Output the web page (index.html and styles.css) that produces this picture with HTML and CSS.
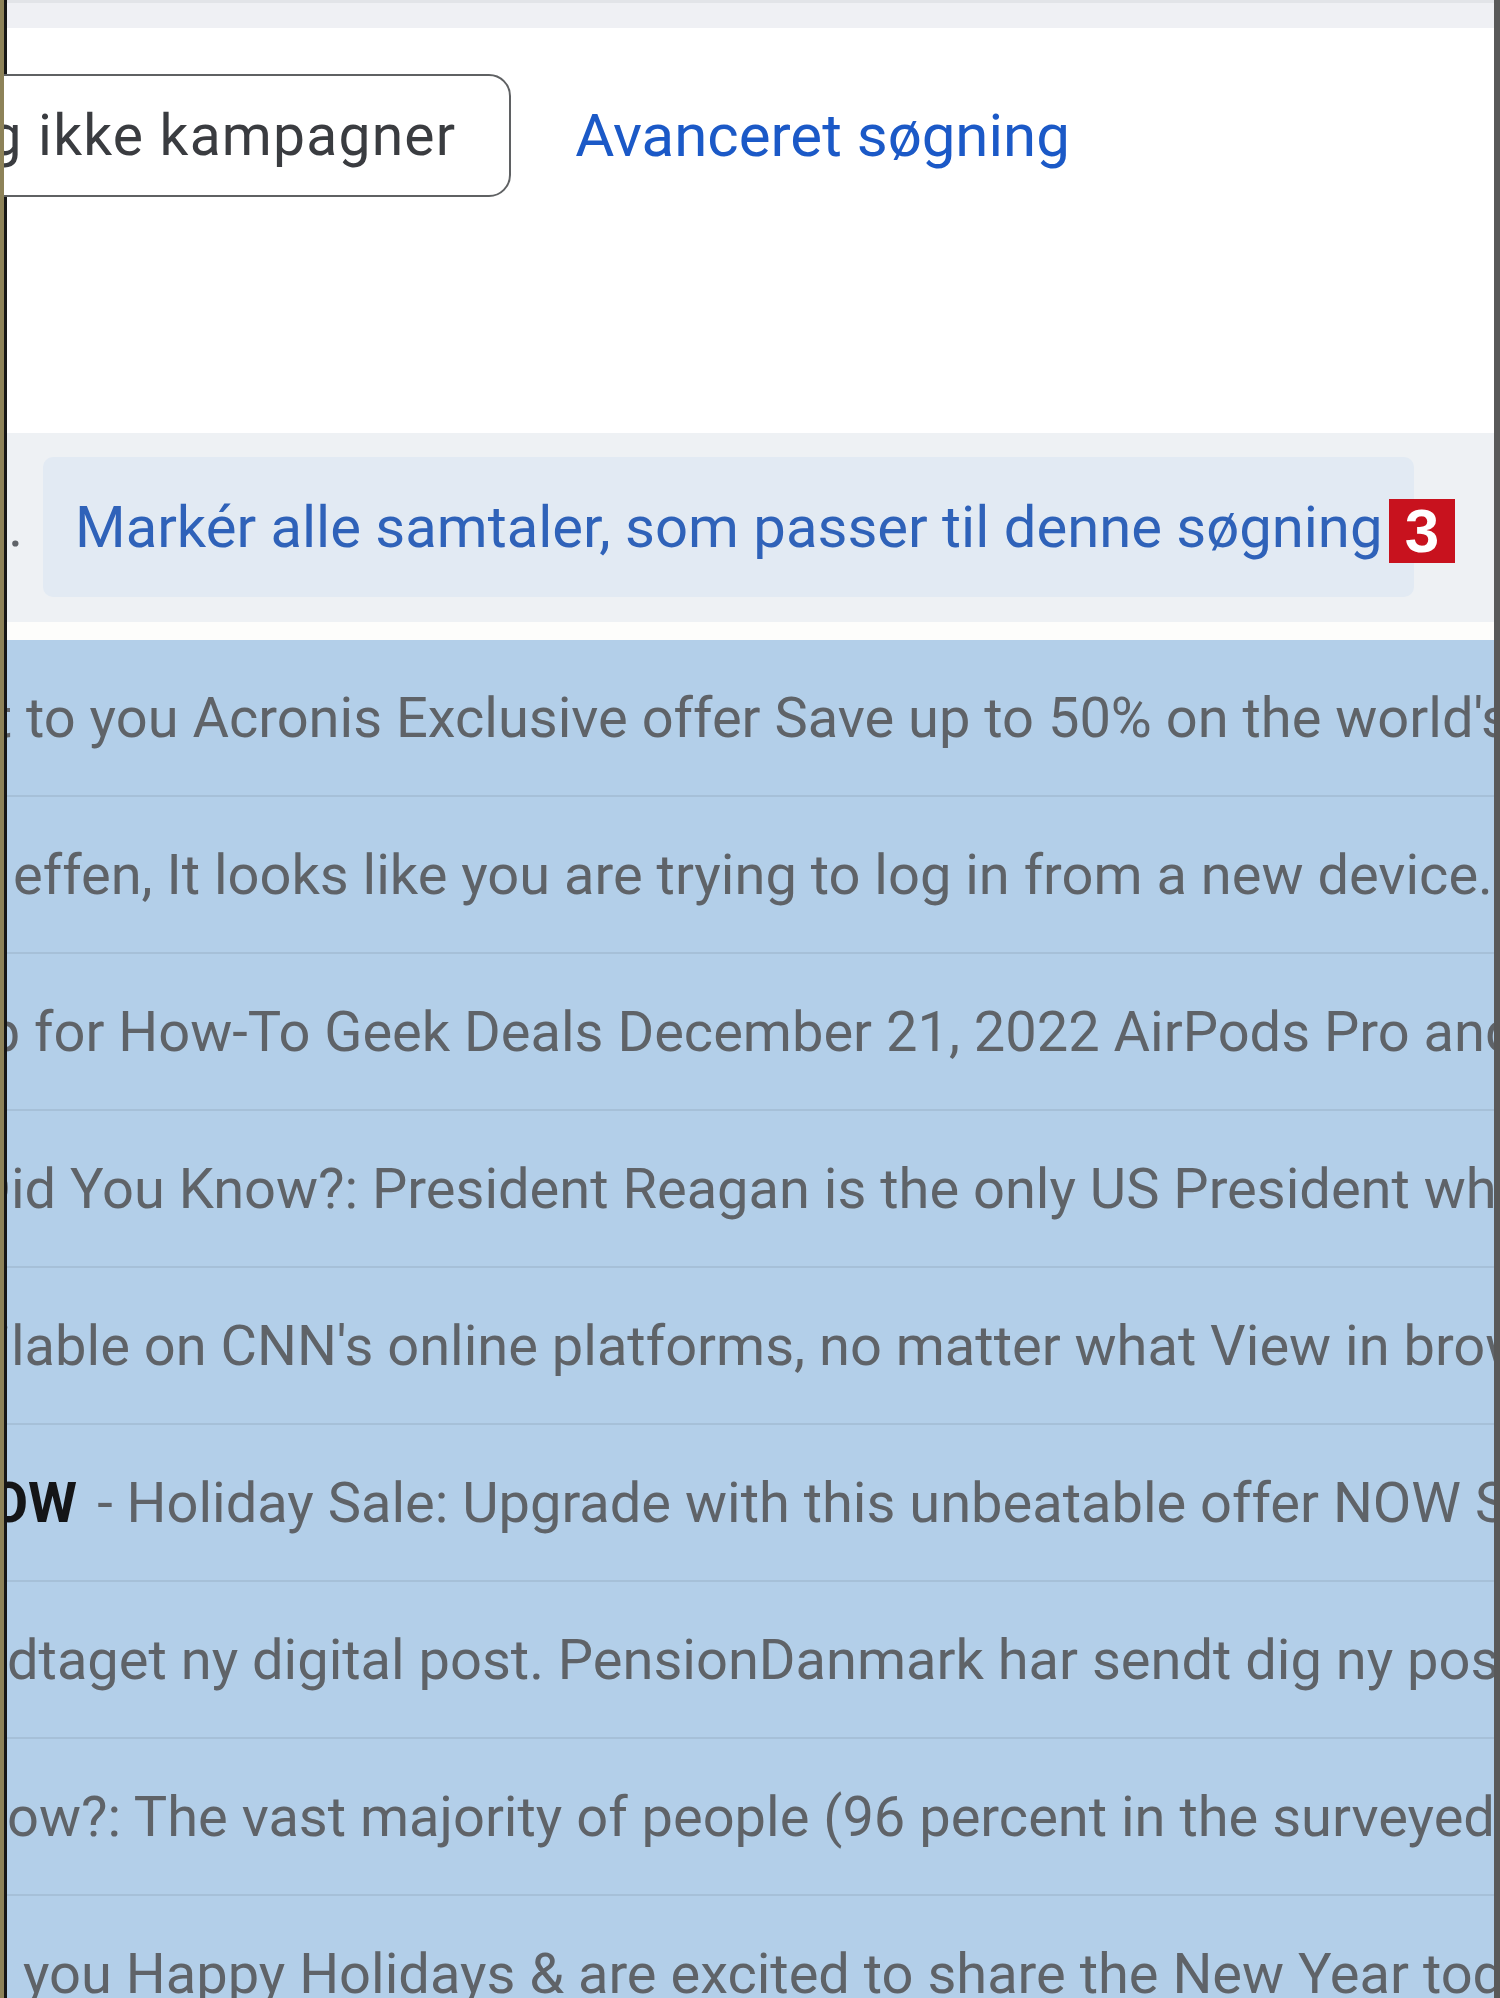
FILE: index.html
```html
<!DOCTYPE html>
<html lang="da">
<head>
<meta charset="utf-8">
<title>Gmail søgning</title>
<link rel="stylesheet" href="styles.css">
</head>
<body>
<div class="screen">
  <div class="frame">
    <div class="topband"></div>
    <div class="toolbar">
      <div class="toolbar-row">
        <button class="chip">Søg ikke kampagner</button>
        <a class="adv" href="#">Avanceret søgning</a>
      </div>
    </div>
    <div class="notice">
      <span class="lead">er markeret.</span>
      <div class="selectall">
        <a class="selectall-link" href="#">Markér alle samtaler, som passer til denne søgning</a>
      </div>
      <span class="badge">3</span>
    </div>
    <div class="gap"></div>
    <ul class="list">
      <li class="row r1"><span class="pre">brought </span><span class="snip">to you Acronis Exclusive offer Save up to 50% on the world's</span></li>
      <li class="row r2"><span class="pre">Hi St</span><span class="snip">effen, It looks like you are trying to log in from a new device.</span></li>
      <li class="row r3"><span class="pre">Sign up </span><span class="snip">for How-To Geek Deals December 21, 2022 AirPods Pro and</span></li>
      <li class="row r4"><span class="pre">D</span><span class="snip">id You Know?: President Reagan is the only US President who</span></li>
      <li class="row r5"><span class="pre">avai</span><span class="snip">lable on CNN's online platforms, no matter what View in browser</span></li>
      <li class="row r6"><span class="snip"><b class="subj">NOW</b><span class="sep">-</span>Holiday Sale: Upgrade with this unbeatable offer NOW Save</span></li>
      <li class="row r7"><span class="pre">Du har mo</span><span class="snip">dtaget ny digital post. PensionDanmark har sendt dig ny post</span></li>
      <li class="row r8"><span class="pre">Did You Kn</span><span class="snip">ow?: The vast majority of people (96 percent in the surveyed</span></li>
      <li class="row r9"><span class="pre">We wish </span><span class="snip">you Happy Holidays &amp; are excited to share the New Year today</span></li>
    </ul>
  </div>
</div>
</body>
</html>
```

FILE: styles.css
```css
* { box-sizing: border-box; }

html, body {
  margin: 0;
  padding: 0;
  background: #ffffff;
}

body {
  font-family: Roboto, "Noto Sans", "Liberation Sans", sans-serif;
}

.screen {
  width: 1500px;
  height: 1998px;
  overflow: hidden;
  display: flex;
  border-left: 4px solid #8d8258;
}

.frame {
  flex: 1;
  min-width: 0;
  display: flex;
  flex-direction: column;
  border-left: 3px solid #161616;
  border-right: 6px solid #595959;
  background: #ffffff;
}

.topband {
  height: 28px;
  flex: none;
  background: #eff0f4;
  border-top: 3px solid #e2e4e8;
}

.toolbar {
  height: 405px;
  flex: none;
  padding-top: 46px;
}

.toolbar-row {
  display: flex;
  align-items: center;
  gap: 64px;
  height: 123px;
  margin-left: -143px;
}

.chip {
  flex: none;
  height: 123px;
  padding: 0 53px 0 55px;
  border: 2px solid #5f6163;
  border-radius: 22px;
  background: #ffffff;
  color: #3a3c40;
  font-family: Roboto, "Noto Sans", sans-serif;
  font-size: 57px;
  letter-spacing: 1.2px;
  white-space: nowrap;
}

.adv {
  color: #1b59c7;
  font-size: 60px;
  text-decoration: none;
  white-space: nowrap;
}

.notice {
  position: relative;
  height: 189px;
  flex: none;
  display: flex;
  align-items: flex-start;
  padding-top: 24px;
  background: #eef1f4;
}

.lead {
  flex: none;
  width: 36px;
  height: 140px;
  display: flex;
  align-items: center;
  justify-content: flex-end;
  overflow: hidden;
  padding-right: 20px;
  color: #5f6368;
  font-size: 56px;
  white-space: pre;
}

.selectall {
  flex: none;
  width: 1371px;
  height: 140px;
  display: flex;
  align-items: center;
  padding-left: 32px;
  background: #e2eaf3;
  border-radius: 10px;
}

.selectall-link {
  color: #2f62b9;
  font-size: 58px;
  text-decoration: none;
  white-space: nowrap;
}

.badge {
  position: absolute;
  left: 1382px;
  top: 66px;
  width: 66px;
  height: 64px;
  background: #c8121e;
  color: #ffffff;
  font-family: "Liberation Sans", Arial, sans-serif;
  font-weight: bold;
  font-size: 62px;
  line-height: 64px;
  text-align: center;
}

.gap {
  height: 18px;
  flex: none;
  background: #fdfdfb;
}

.list {
  list-style: none;
  margin: 0;
  padding: 0;
  flex: 1;
  background: #b3cfe9;
}

.row {
  height: 157px;
  display: flex;
  align-items: center;
  overflow: hidden;
  border-bottom: 2px solid #a6c0d8;
  color: #5f6368;
  font-size: 56px;
  white-space: pre;
}

.pre {
  flex: none;
  display: flex;
  justify-content: flex-end;
  overflow: hidden;
  width: var(--w);
}

.snip {
  flex: none;
  margin-left: var(--m, 0px);
}

.subj {
  color: #141517;
  font-weight: bold;
}

.sep {
  margin: 0 14px 0 20px;
}

.r1 { --w: 19px; }
.r2 { --w: 0px; --m: 6px; }
.r3 { --w: 27px; }
.r4 { --w: 4px; }
.r5 { --w: 4px; }
.r6 { --m: -57px; }
.r7 { --w: 0px; }
.r8 { --w: 0px; }
.r9 { --w: 16px; }
```
